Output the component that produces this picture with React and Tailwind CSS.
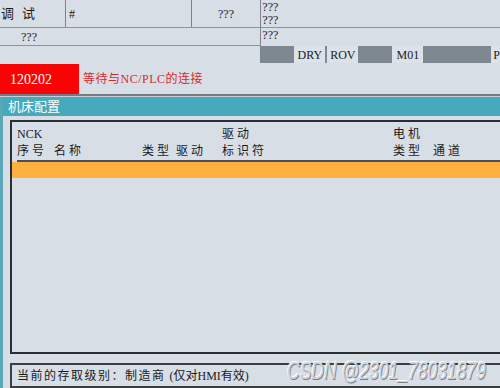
export default function App() {
  const cjk = { fontFamily: '"Liberation Serif", "Noto Sans CJK SC", serif' };
  return (
    <div className="relative w-[500px] h-[388px] overflow-hidden bg-[#d8dee6] flex flex-col text-[12px] text-[#1a1a1a]" style={cjk}>
      {/* header */}
      <div className="flex h-[63px] shrink-0">
        <div className="w-[262px] flex flex-col border-r border-[#7c858e]">
          <div className="h-[28px] flex border-b border-[#8b949c]">
            <div className="w-[66px] border-r border-[#7c858e] flex items-center pl-[1px] text-[13px] tracking-[8px]">调试</div>
            <div className="w-[126px] border-r border-[#7c858e] flex items-center pl-[3px]">#</div>
            <div className="flex-1 flex items-center pl-[26px]">???</div>
          </div>
          <div className="h-[18px] flex items-center pl-[21px] border-b border-[#8b949c]">???</div>
          <div className="flex-1"></div>
        </div>
        <div className="flex-1 flex flex-col">
          <div className="h-[28px] flex flex-col border-b border-[#8b949c] pl-[1px] leading-[13px] pt-[1px]">
            <div>???</div>
            <div>???</div>
          </div>
          <div className="h-[18px] pl-[1px] leading-[14px]">???</div>
          <div className="h-[17px] bg-[#7d8891] flex items-stretch text-[12px]">
            <div className="w-[33px] shrink-0"></div>
            <div className="w-[31px] shrink-0 bg-[#dce2e9] flex items-center justify-center">DRY</div>
            <div className="w-[2px] shrink-0"></div>
            <div className="w-[31px] shrink-0 bg-[#dce2e9] flex items-center justify-center">ROV</div>
            <div className="w-[34px] shrink-0"></div>
            <div className="w-[31px] shrink-0 bg-[#dce2e9] flex items-center justify-center">M01</div>
            <div className="w-[68px] shrink-0"></div>
            <div className="flex-1 bg-[#dce2e9] pl-[2px] overflow-hidden flex items-center">P</div>
          </div>
        </div>
      </div>
      {/* alarm */}
      <div className="h-[30px] mt-[1px] flex shrink-0">
        <div className="w-[79px] bg-[#f80404] text-white text-[14px] flex items-center pl-[10px]">120202</div>
        <div className="flex-1 flex items-center pl-[4px] text-[#d62a2a] text-[12px] tracking-[0.5px]">等待与NC/PLC的连接</div>
      </div>
      <div className="h-[2px] bg-[#737b83] shrink-0"></div>
      <div className="h-[1px] bg-[#c7ced6] shrink-0"></div>
      {/* panel */}
      <div className="flex-1 flex flex-col border-l-[3px] border-[#5aa7b6]">
        <div className="h-[19px] bg-[#46a9bc] text-white text-[13px] flex items-center pl-[5px] shrink-0">机床配置</div>
        <div className="flex-1 flex flex-col pl-[7px] pt-[4px]">
          <div className="h-[234px] border-t-2 border-l-2 border-b-2 border-[#2a2d31] flex flex-col">
            <div className="h-[38px] relative text-[12px]">
              <span className="absolute left-[5px] top-[3px]">NCK</span>
              <span className="absolute left-[5px] top-[20px] tracking-[3px]">序号</span>
              <span className="absolute left-[42px] top-[20px] tracking-[3px]">名称</span>
              <span className="absolute left-[130px] top-[20px] tracking-[3px]">类型</span>
              <span className="absolute left-[164px] top-[20px] tracking-[3px]">驱动</span>
              <span className="absolute left-[210px] top-[3px] tracking-[3px]">驱动</span>
              <span className="absolute left-[210px] top-[20px] tracking-[3px]">标识符</span>
              <span className="absolute left-[381px] top-[3px] tracking-[3px]">电机</span>
              <span className="absolute left-[381px] top-[20px] tracking-[3px]">类型</span>
              <span className="absolute left-[421px] top-[20px] tracking-[3px]">通道</span>
            </div>
            <div className="h-[2px] ml-[5px] bg-[#4a4f55]"></div>
            <div className="h-[16px] bg-[#ffb13f]"></div>
            <div className="flex-1"></div>
          </div>
          <div className="h-[9px]"></div>
          <div className="flex-1 border-t-2 border-l-2 border-b-2 border-[#3a3e43] flex items-center pl-[5px] text-[12px] whitespace-nowrap">
            <span className="tracking-[1.5px]">当前的存取级别：制造商</span>
            <span className="ml-[4px]">(仅对HMI有效)</span>
          </div>
        </div>
      </div>
      <div
        className="absolute left-[287px] top-[359px] text-[24px] leading-[24px] italic whitespace-nowrap text-[#cfd3d8] scale-x-[0.73] origin-left"
        style={{ fontFamily: '"Liberation Sans", sans-serif', textShadow: '1px 1px 0 #7a7f85, -1px -1px 0 #ffffff' }}
      >
        CSDN @2301_78031879
      </div>
    </div>
  );
}
